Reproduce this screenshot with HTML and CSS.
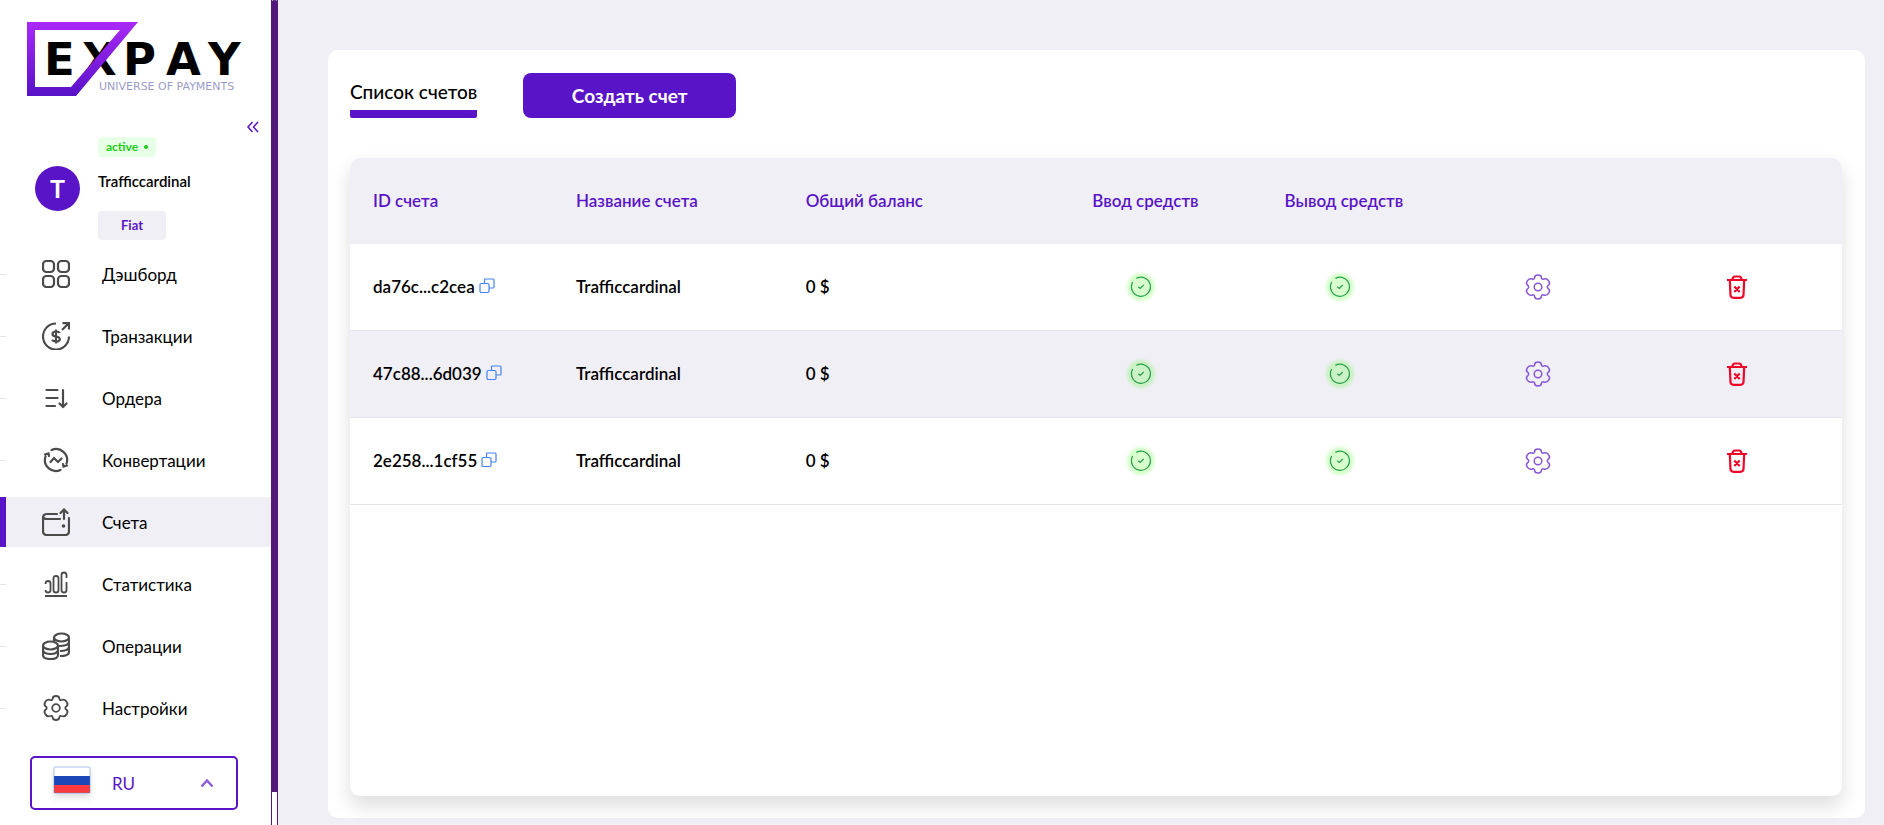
FILE: index.html
```html
<!DOCTYPE html>
<html lang="ru">
<head>
<meta charset="utf-8">
<title>EXPAY — Счета</title>
<link rel="stylesheet" href="styles.css">
</head>
<body>
<svg class="sprite" aria-hidden="true">
  <defs>
    <symbol id="gear" viewBox="0 0 28 28">
      <path d="M10.6 4.6 Q10.8 2 14 2 Q17.2 2 17.4 4.6 Q17.6 6.6 19.6 6 Q23 4.700 25 8.300 Q26.400 11 24.200 12.400 Q22.400 14 24.200 15.600 Q26.400 17 25 19.700 Q23 23.300 19.600 22 Q17.600 21.400 17.400 23.400 Q17.200 26 14 26 Q10.800 26 10.600 23.400 Q10.400 21.400 8.400 22 Q5 23.300 3 19.700 Q1.600 17 3.800 15.600 Q5.600 14 3.800 12.400 Q1.600 11 3 8.300 Q5 4.700 8.400 6 Q10.400 6.600 10.600 4.600 Z"/>
      <circle cx="14" cy="14" r="3.800"/>
    </symbol>
    <symbol id="copy" viewBox="0 0 16 16">
      <rect x="1" y="5.500" width="9" height="9" rx="1.200"/>
      <path d="M5.500 5.500V2Q5.500 1 6.500 1H14Q15 1 15 2V9Q15 10 14 10H10"/>
    </symbol>
    <symbol id="check" viewBox="0 0 24 24">
      <path d="M7.400 3.400A9.500 9.500 0 1 1 3.700 7"/>
      <path d="M9.300 11.800L11.200 13.500L14.700 10"/>
    </symbol>
    <symbol id="trash" viewBox="0 0 24 28">
      <path d="M2 7H22M7.500 7Q7.500 3.500 10 3.500H14Q16.500 3.500 16.500 7M4.800 7L5.500 22Q5.700 24.800 8.500 24.800H15.500Q18.300 24.800 18.500 22L19.200 7M9.300 13.500L14.700 19M14.700 13.500L9.300 19"/>
    </symbol>
  </defs>
</svg>
<div class="app">
  <aside class="sidebar">
    <a class="logo" href="#" aria-label="EXPAY">
      <svg viewBox="0 0 216 75" width="216" height="75">
        <defs>
          <linearGradient id="brand" x1="0" y1="0" x2="0" y2="1">
            <stop offset="0" stop-color="#aa29f7"/>
            <stop offset="1" stop-color="#5712c7"/>
          </linearGradient>
        </defs>
        <text class="logo-name" x="17 55 96 139 181" y="53">EXPAY</text>
        <path fill="url(#brand)" fill-rule="evenodd" d="M0 0H111L49 74H0ZM8 8V65H44L93 8Z"/>
        <text class="logo-tag" x="72" y="68">UNIVERSE OF PAYMENTS</text>
      </svg>
    </a>
    <button class="collapse" aria-label="Свернуть меню">
      <svg viewBox="0 0 12 12" width="12" height="12"><path d="M5.500 1L1 6L5.500 11M11 1L6.500 6L11 11"/></svg>
    </button>
    <div class="profile">
      <span class="avatar">T</span>
      <div class="profile-info">
        <span class="status">active <i class="dot"></i></span>
        <span class="user-name">Trafficcardinal</span>
        <button class="fiat">Fiat</button>
      </div>
    </div>
    <nav class="menu">
      <a href="#"><svg viewBox="0 0 28 28"><rect x="1" y="1" width="11" height="11" rx="3.500"/><rect x="16" y="1" width="11" height="11" rx="3.500"/><rect x="1" y="16" width="11" height="11" rx="3.500"/><rect x="16" y="16" width="11" height="11" rx="3.500"/></svg>Дэшборд</a>
      <a href="#"><svg viewBox="0 0 28 28"><path d="M14 1.500A13 13 0 1 0 27 14.500M20 8L26.500 1.500M20.500 1.200H27V7.500M17.800 11Q17 9.500 14 9.500Q10.500 9.500 10.500 12Q10.500 14.200 14 14.500Q17.800 14.800 17.800 17.200Q17.800 19.500 14 19.500Q11 19.500 10 17.800M14 7.500V21.500"/></svg>Транзакции</a>
      <a href="#"><svg viewBox="0 0 28 28"><path d="M4.500 6H15.500M4.500 14H15.500M4.500 22H13M21 6V22M17.500 19.500L21 23L24.500 19.500" stroke-linecap="round"/></svg>Ордера</a>
      <a href="#"><svg viewBox="0 0 28 28"><path d="M9.500 4A11 11 0 0 1 24.500 17.500M18.500 24A11 11 0 0 1 3.500 10.500M3 8.500L6.500 7.500L7 10M25 19.500L21.500 20.500L21 18M8.500 16L12 12L16 16L19.500 12.500" stroke-linecap="round"/></svg>Конвертации</a>
      <a class="active" href="#" aria-current="page"><svg viewBox="0 0 28 28"><path d="M15 6H5Q1 6 1 10V23Q1 27 5 27H23Q27 27 27 23V10M1 9Q2 11 5 11H18M22 11V2M18.500 5L22 1.500L25.500 5" stroke-linecap="round"/><circle class="solid" cx="21.500" cy="18" r="1.800"/></svg>Счета</a>
      <a href="#"><svg class="thin" viewBox="0 0 28 28"><path d="M3.500 14Q3.500 11 6 11Q8.500 11 8.500 13.500V20Q8.500 22.500 6 22.500Q3.500 22.500 3.500 20M11.500 8Q11.500 6 14 6Q16.500 6 16.500 8V20.500Q16.500 22.500 14 22.500Q11.500 22.500 11.500 20.500ZM24.500 8V5Q24.500 2.500 22 2.500Q19.500 2.500 19.500 5V20Q19.500 22.500 22 22.500Q24.500 22.500 24.500 20V12M3 26H25"/></svg>Статистика</a>
      <a href="#"><svg viewBox="0 0 28 28"><ellipse cx="19.500" cy="5.500" rx="7.500" ry="4"/><path d="M12 5.500V9M27 5.500V20Q27 24 18 24M27 10.300Q26 14 17 14M27 15Q26 19 18 19"/><ellipse cx="8.500" cy="13.500" rx="7.500" ry="4"/><path d="M1 13.500V23Q1 27 8.500 27T16 23V13.500M1 18.300Q2 22 8.500 22T16 18.300"/></svg>Операции</a>
      <a href="#"><svg class="thin"><use href="#gear"/></svg>Настройки</a>
    </nav>
    <button class="language" aria-label="Язык">
      <svg class="flag" viewBox="0 0 38 28" width="38" height="28"><rect x="1" y="1" width="36" height="26" fill="#fff"/><path fill="#1b47b8" d="M1 10H37V19H1Z"/><path fill="#fc3a40" d="M1 19H37V27H1Z"/><rect x="1" y="1" width="36" height="26" rx="1" fill="none" stroke="#5d83d2" stroke-opacity=".5"/></svg>
      <span>RU</span>
      <svg class="chevron" viewBox="0 0 14 10" width="14" height="10"><path d="M1.500 8.500L7 2.500L12.500 8.500"/></svg>
    </button>
  </aside>
  <div class="scroll-track"><div class="scroll-thumb"></div></div>
  <main class="content">
    <section class="card">
      <header class="card-head">
        <h1 class="tab">Список счетов</h1>
        <button class="create">Создать счет</button>
      </header>
      <div class="table-box">
        <table>
          <colgroup><col class="c-id"><col class="c-name"><col class="c-balance"><col class="c-icon"><col class="c-icon"><col class="c-icon"><col></colgroup>
          <thead>
            <tr><th>ID счета</th><th>Название счета</th><th>Общий баланс</th><th class="mid">Ввод средств</th><th class="mid">Вывод средств</th><th></th><th></th></tr>
          </thead>
          <tbody>
            <tr>
              <td><span class="id">da76c...c2cea<button class="copy" aria-label="Копировать"><svg><use href="#copy"/></svg></button></span></td><td>Trafficcardinal</td><td>0 $</td>
              <td class="mid"><svg class="check"><use href="#check"/></svg></td><td class="mid"><svg class="check"><use href="#check"/></svg></td>
              <td class="mid"><button class="gear" aria-label="Настройки"><svg><use href="#gear"/></svg></button></td>
              <td class="mid"><button class="trash" aria-label="Удалить"><svg><use href="#trash"/></svg></button></td>
            </tr>
            <tr>
              <td><span class="id">47c88...6d039<button class="copy" aria-label="Копировать"><svg><use href="#copy"/></svg></button></span></td><td>Trafficcardinal</td><td>0 $</td>
              <td class="mid"><svg class="check"><use href="#check"/></svg></td><td class="mid"><svg class="check"><use href="#check"/></svg></td>
              <td class="mid"><button class="gear" aria-label="Настройки"><svg><use href="#gear"/></svg></button></td>
              <td class="mid"><button class="trash" aria-label="Удалить"><svg><use href="#trash"/></svg></button></td>
            </tr>
            <tr>
              <td><span class="id">2e258...1cf55<button class="copy" aria-label="Копировать"><svg><use href="#copy"/></svg></button></span></td><td>Trafficcardinal</td><td>0 $</td>
              <td class="mid"><svg class="check"><use href="#check"/></svg></td><td class="mid"><svg class="check"><use href="#check"/></svg></td>
              <td class="mid"><button class="gear" aria-label="Настройки"><svg><use href="#gear"/></svg></button></td>
              <td class="mid"><button class="trash" aria-label="Удалить"><svg><use href="#trash"/></svg></button></td>
            </tr>
          </tbody>
        </table>
      </div>
    </section>
  </main>
</div>
</body>
</html>
```
FILE: styles.css
```css
:root {
  --purple: #5914c8;
  --pale: #f0eff5;
  --line: #e4e4e9;
}
* { box-sizing: border-box; }
body {
  margin: 0;
  background: var(--pale);
  color: #000;
  font-family: Lato, "Open Sans", sans-serif;
  font-size: 16px;
}
button {
  margin: 0;
  padding: 0;
  border: 0;
  background: none;
  color: inherit;
  font: inherit;
  cursor: pointer;
}
svg { display: block; flex: none; }
.sprite { position: absolute; width: 0; height: 0; }
.app { display: flex; min-height: 100vh; }

.sidebar {
  display: flex;
  flex-direction: column;
  flex: none;
  width: 271px;
  padding-top: 22px;
  background: #fff;
}
.logo { padding-left: 27px; }
.logo-name { font: bold 45px "DejaVu Sans", sans-serif; fill: #000; }
.logo-tag { font: 11px "DejaVu Sans", sans-serif; fill: #9b9ccb; }
.collapse { align-self: flex-end; margin: 24px 12px 0 0; }
.collapse path { fill: none; stroke: var(--purple); stroke-width: 1.5; }
.profile {
  display: flex;
  align-items: center;
  gap: 18px;
  margin-top: 4px;
  padding-left: 35px;
}
.avatar {
  width: 45px;
  height: 45px;
  border-radius: 50%;
  background: var(--purple);
  color: #fff;
  font-size: 25px;
  font-weight: 700;
  line-height: 45px;
  text-align: center;
}
.profile-info { display: flex; flex-direction: column; align-items: flex-start; }
.status {
  display: flex;
  align-items: center;
  gap: 6px;
  padding: 0 8px;
  border-radius: 4px;
  background: #e6ffe6;
  color: #1ccb14;
  font-size: 12px;
  font-weight: 700;
  line-height: 20px;
}
.dot { width: 4px; height: 4px; border-radius: 50%; background: #1ccb14; }
.user-name { margin: 14px 0 20px; font-size: 15px; font-weight: 600; line-height: 20px; }
.fiat {
  width: 68px;
  border-radius: 4px;
  background: var(--pale);
  color: var(--purple);
  font-size: 13px;
  font-weight: 700;
  line-height: 29px;
}

.menu { display: flex; flex-direction: column; gap: 12px; margin-top: 9px; }
.menu a {
  display: flex;
  align-items: center;
  height: 50px;
  color: #000;
  font-size: 17px;
  text-decoration: none;
}
.menu a::before { content: ""; width: 6px; height: 1px; background: var(--line); }
.menu a.active { background: var(--pale); }
.menu a.active::before { height: 50px; background: var(--purple); }
.menu svg {
  width: 28px;
  height: 28px;
  margin: 0 32px 0 36px;
  fill: none;
  stroke: #4a4a4a;
  stroke-width: 2.2;
}
.menu svg.thin { stroke-width: 1.8; }
.menu .solid { fill: #4a4a4a; stroke: none; }

.language {
  display: flex;
  align-items: center;
  height: 54px;
  margin: 23px 33px 0 30px;
  padding: 0 22px 0 21px;
  border: 2px solid var(--purple);
  border-radius: 5px;
  color: var(--purple);
  font-size: 17px;
}
.language span { margin: 0 auto 0 21px; }
.flag { margin-bottom: 6px; filter: drop-shadow(0 4px 3px #0002); }
.chevron path { fill: none; stroke: #8c5bdb; stroke-width: 2.5; }

.scroll-track {
  flex: none;
  width: 7px;
  border: solid #52187a;
  border-width: 0 1px;
  background: #fff;
}
.scroll-thumb { height: 96%; margin: 0 -1px; border-radius: 4px 4px 0 0; background: #52187a; }

.content { display: flex; flex: 1; min-width: 0; padding: 50px 19px 7px 50px; }
.card {
  display: flex;
  flex: 1;
  flex-direction: column;
  gap: 40px;
  min-width: 0;
  padding: 23px 23px 22px 22px;
  border-radius: 10px;
  background: #fff;
}
.card-head { display: flex; align-items: flex-end; gap: 46px; }
.tab {
  margin: 0;
  border-bottom: 8px solid var(--purple);
  border-radius: 2px;
  font-size: 19px;
  font-weight: 500;
  line-height: 36px;
}
.create {
  width: 213px;
  border-radius: 8px;
  background: var(--purple);
  color: #fff;
  font-size: 19px;
  font-weight: 700;
  line-height: 45px;
}
.table-box {
  flex: 1;
  overflow: hidden;
  border-radius: 10px;
  background: #fff;
  box-shadow: 0 10px 20px #0002;
}
table { width: 100%; border-collapse: separate; border-spacing: 0; table-layout: fixed; }
.c-id { width: 13.6%; }
.c-name { width: 15.4%; }
.c-balance { width: 17.4%; }
.c-icon { width: 13.3%; }
th, td { padding: 0 0 2px 23px; text-align: left; font-size: 17px; font-weight: 600; white-space: nowrap; }
th { height: 86px; background: var(--pale); color: var(--purple); }
td { height: 87px; border-bottom: 1px solid var(--line); }
tbody tr:nth-child(2) { background: var(--pale); }
th.mid { padding-left: 8px; text-align: center; }
td.mid { padding: 0; }
td.mid:last-child { padding-right: 6px; }
td.mid > * { display: block; margin: 0 auto; }
.id { display: flex; align-items: center; gap: 4px; }
.copy svg { width: 16px; height: 16px; fill: none; stroke: #4583fa; stroke-width: 1.2; }
.check {
  width: 24px;
  height: 24px;
  border-radius: 50%;
  background: #33ff0033;
  box-shadow: 0 0 3px 2px #33ff0033;
  fill: none;
  stroke: #2b9d4e;
  stroke-width: 1.2;
}
.gear { width: 28px; }
.gear svg { width: 28px; height: 28px; fill: none; stroke: #8757d8; stroke-width: 1.5; }
.trash { width: 24px; }
.trash svg { width: 24px; height: 28px; fill: none; stroke: #f00628; stroke-width: 2.2; }
```
